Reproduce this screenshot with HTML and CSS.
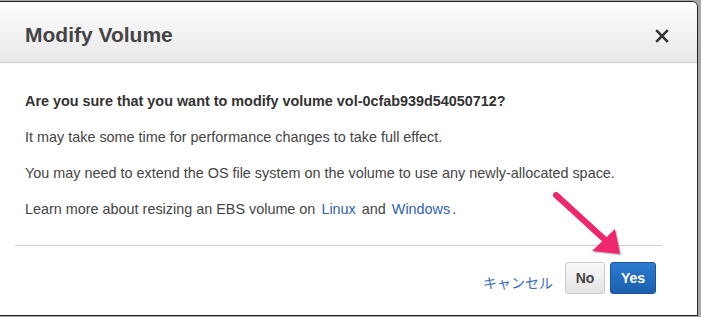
FILE: index.html
```html
<!DOCTYPE html>
<html lang="en">

<head>
    <meta charset="UTF-8">
    <title>Modify Volume</title>
    <link rel="stylesheet" href="styles.css">
</head>

<body>
    <div class="modal">
        <div class="modal-header">
            <h1>Modify Volume</h1>
            <button class="close" aria-label="Close">
                <svg width="14" height="14" viewBox="0 0 14 14">
                    <path d="M1.2 1.2 L12.8 12.8 M12.8 1.2 L1.2 12.8" stroke="#333" stroke-width="2.6" fill="none" />
                </svg>
            </button>
        </div>

        <div class="modal-body">
            <p class="question">Are you sure that you want to modify volume vol-0cfab939d54050712?</p>
            <p>It may take some time for performance changes to take full effect.</p>
            <p>You may need to extend the OS file system on the volume to use any newly-allocated space.</p>
            <p>Learn more about resizing an EBS volume on <a href="#">Linux</a> and <a href="#">Windows</a>.</p>
        </div>

        <div class="modal-footer">
            <a href="#" class="cancel">キャンセル</a>
            <button class="btn btn-no">No</button>
            <button class="btn btn-yes">Yes</button>
        </div>

        <!-- annotation arrow drawn over the dialog -->
        <svg class="arrow" width="90" height="80" viewBox="0 0 90 80">
            <g transform="translate(1.5,1.5)" fill="rgba(0,0,0,0.22)">
                <path d="M3 3 L50 46" stroke="rgba(0,0,0,0.22)" stroke-width="6" stroke-linecap="round" />
                <polygon points="39,59 62,37 67,62" />
            </g>
            <path d="M3 3 L50 46" stroke="#f0276e" stroke-width="6" stroke-linecap="round" />
            <polygon points="39,59 62,37 67,62" fill="#f0276e" />
        </svg>
    </div>
</body>

</html>
```

FILE: styles.css
```css
body {
    margin: 0;
    background-color: #a8a8a8;
    font-family: "Liberation Sans", Arial, sans-serif;
    width: 701px;
    height: 317px;
    overflow: hidden;
}

.modal {
    position: relative;
    box-sizing: border-box;
    width: 698px;
    height: 315px;
    margin-top: 1px;
    background-color: #fff;
    border: 1px solid #222;
    border-left: none;
    border-top-right-radius: 6px;
    color: #444;
}

.modal-header {
    display: flex;
    align-items: center;
    justify-content: space-between;
    height: 60px;
    padding: 0 28px 0 25px;
    background: linear-gradient(#fdfdfd, #e9e9e9);
    border-bottom: 1px solid #cfcfcf;
    border-top-right-radius: 5px;
}

.modal-header h1 {
    margin: 6px 0 0;
    font-size: 21px;
    font-weight: bold;
    color: #444;
}

.close {
    border: none;
    background: none;
    padding: 0;
    margin-top: 8px;
    display: flex;
}

.modal-body {
    margin: 0 35px 0 15px;
    padding: 30px 0 27px 10px;
    font-size: 14.4px;
    border-bottom: 1px solid #cfcfcf;
}

.modal-body p {
    margin: 0 0 19px;
    line-height: 17px;
}

.modal-body p:last-child {
    margin-bottom: 0;
}

.modal-body .question {
    font-weight: bold;
    color: #333;
}

.modal-body a {
    color: #2f62b3;
    text-decoration: none;
    padding: 0 2px;
}

.modal-footer {
    display: flex;
    justify-content: flex-end;
    align-items: center;
    gap: 5px;
    padding: 16px 41px 0 0;
}

.cancel {
    font-family: "Noto Sans CJK JP", sans-serif;
    font-size: 14px;
    color: #3b6fc2;
    text-decoration: none;
    margin-right: 7px;
    margin-top: 7px;
}

.btn {
    height: 32px;
    border-radius: 3px;
    font-family: "Liberation Sans", Arial, sans-serif;
    font-size: 14px;
    font-weight: bold;
    padding: 0;
}

.btn-no {
    width: 40px;
    color: #444;
    background: linear-gradient(#f9f9f9, #e4e4e4);
    border: 1px solid #c8c8c8;
}

.btn-yes {
    width: 46px;
    color: #fff;
    background: linear-gradient(#2c7bd0, #1b5fae);
    border: 1px solid #1a56a0;
}

.arrow {
    position: absolute;
    left: 553px;
    top: 190px;
}
```
